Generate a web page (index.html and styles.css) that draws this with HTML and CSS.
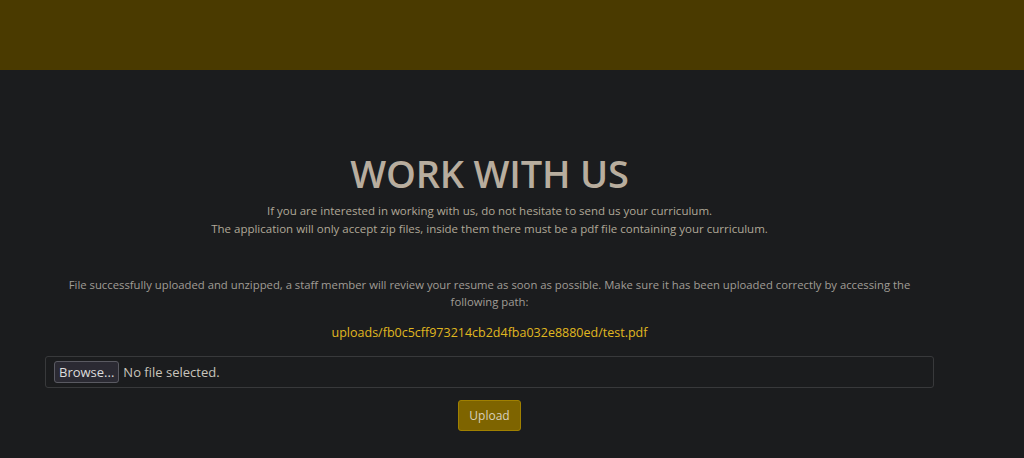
FILE: index.html
```html
<!DOCTYPE html>
<html lang="en">
<head>
<meta charset="utf-8">
<title>Work with us</title>
<link rel="stylesheet" href="styles.css">
</head>
<body>
<header class="topbar"></header>
<main class="content">
  <h1 class="title">WORK WITH US</h1>
  <p class="intro">If you are interested in working with us, do not hesitate to send us your curriculum.<br>The application will only accept zip files, inside them there must be a pdf file containing your curriculum.</p>
  <p class="message">File successfully uploaded and unzipped, a staff member will review your resume as soon as possible. Make sure it has been uploaded correctly by accessing the following path:</p>
  <p class="path">uploads/fb0c5cff973214cb2d4fba032e8880ed/test.pdf</p>
  <form class="upload-form">
    <div class="file-box"><span class="browse">Browse...</span><span class="file-name">No file selected.</span></div>
    <button type="button" class="upload-btn">Upload</button>
  </form>
</main>
</body>
</html>
```
FILE: styles.css
```css
html, body {
  margin: 0;
  padding: 0;
  background: #1b1c1e;
  font-family: "Open Sans", "Noto Sans", sans-serif;
}
.topbar {
  height: 70px;
  background: #4a3a00;
}
.content {
  width: 889px;
  margin-left: 45px;
  padding-top: 80px;
  display: flex;
  flex-direction: column;
  align-items: center;
  text-align: center;
}
.title {
  margin: 0;
  font-size: 38px;
  font-weight: 600;
  color: #b8ad9e;
  line-height: 46px;
  letter-spacing: -0.2px;
}
.intro {
  margin: 6px 0 0;
  font-size: 11.5px;
  line-height: 18px;
  color: #b0a898;
}
.message {
  margin: 38px 0 0;
  padding: 0 18px;
  font-size: 11.3px;
  line-height: 17px;
  color: #a09c96;
}
.path {
  margin: 14px 0 0;
  font-size: 12.5px;
  line-height: 18px;
  color: #e0b820;
}
.upload-form {
  align-self: stretch;
  margin-top: 14px;
  display: flex;
  flex-direction: column;
  align-items: center;
}
.file-box {
  align-self: stretch;
  height: 30px;
  border: 1px solid #38393b;
  border-radius: 3px;
  display: flex;
  align-items: center;
  padding-left: 8px;
  gap: 4px;
  font-size: 13px;
  color: #c8c4bc;
}
.browse {
  border: 1px solid #5a5a62;
  border-radius: 3px;
  background: #2b2a33;
  padding: 1px 4px;
  color: #dcdcdc;
}
.upload-btn {
  margin-top: 12px;
  width: 63px;
  height: 31px;
  background: #7e6400;
  border: 1px solid #a08000;
  border-radius: 3px;
  color: #d8d0bc;
  font-family: inherit;
  font-size: 12px;
  padding: 0;
}
```
